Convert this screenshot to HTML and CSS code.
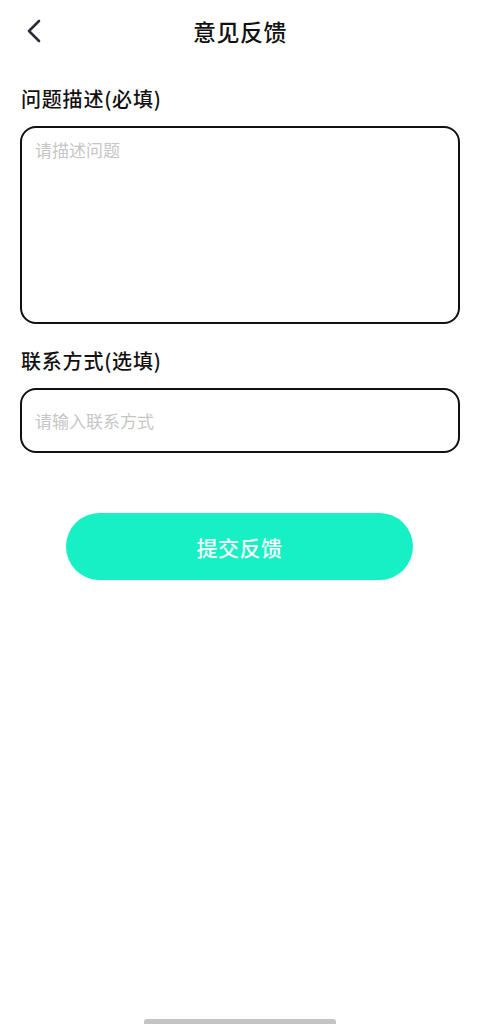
FILE: index.html
```html
<!DOCTYPE html>
<html lang="zh-CN">
<head>
<meta charset="utf-8">
<title>意见反馈</title>
<link rel="stylesheet" href="styles.css">
</head>
<body>
<div class="page">
  <header class="topbar">
    <button class="back" aria-label="返回">
      <svg width="16" height="24" viewBox="0 0 16 24"><path d="M13 2 L3 12 L13 22" fill="none" stroke="#2b2b3b" stroke-width="2.6" stroke-linecap="round" stroke-linejoin="round"/></svg>
    </button>
    <h1 class="title">意见反馈</h1>
  </header>
  <main class="form">
    <label class="label label-first">问题描述(必填)</label>
    <textarea class="area" placeholder="请描述问题"></textarea>
    <label class="label label-second">联系方式(选填)</label>
    <input class="field" type="text" placeholder="请输入联系方式">
    <div class="actions">
      <button class="submit">提交反馈</button>
    </div>
  </main>
  <div class="home-bar"></div>
</div>
</body>
</html>
```
FILE: styles.css
```css
* { box-sizing: border-box; }
html, body { margin: 0; padding: 0; background: #fff; }
body {
  font-family: "Noto Sans CJK SC", "Noto Sans", sans-serif;
  color: #111;
  width: 480px;
  height: 1024px;
  overflow: hidden;
}
.page {
  position: relative;
  height: 1024px;
  display: flex;
  flex-direction: column;
}
.topbar {
  position: relative;
  height: 62px;
  display: flex;
  align-items: center;
  justify-content: center;
}
.back {
  position: absolute;
  left: 24px;
  top: 18px;
  width: 20px;
  height: 26px;
  padding: 0;
  border: 0;
  background: none;
  display: flex;
  align-items: center;
  justify-content: center;
}
.title {
  margin: 0;
  font-size: 23px;
  font-weight: 500;
  line-height: 30px;
  color: #111;
  letter-spacing: 0.5px;
}
.form {
  padding: 0 20px;
  display: flex;
  flex-direction: column;
}
.label {
  display: block;
  font-size: 20px;
  font-weight: 500;
  line-height: 28px;
  color: #111;
  padding-left: 1px;
  letter-spacing: 0.8px;
}
.label-first { margin-top: 23px; margin-bottom: 13px; }
.label-second { margin-top: 23px; margin-bottom: 13px; }
.area, .field {
  width: 440px;
  border: 2px solid #111;
  border-radius: 16px;
  font-family: "Noto Sans CJK SC", "Noto Sans", sans-serif;
  font-size: 17px;
  color: #222;
  background: #fff;
  outline: none;
  resize: none;
}
.area {
  height: 198px;
  padding: 10px 13px;
  line-height: 24px;
}
.field {
  height: 65px;
  padding: 0 13px;
}
.area::placeholder, .field::placeholder { color: #c6c6c6; }
.actions {
  margin-top: 60px;
  display: flex;
  justify-content: center;
}
.submit {
  width: 347px;
  height: 67px;
  border: 0;
  border-radius: 34px;
  background: #16f0c4;
  color: #fff;
  font-family: "Noto Sans CJK SC", "Noto Sans", sans-serif;
  font-size: 21px;
  font-weight: 500;
  letter-spacing: 0.5px;
  margin-left: -1px;
}
.home-bar {
  position: absolute;
  left: 144px;
  bottom: 0;
  width: 192px;
  height: 5px;
  border-radius: 3px 3px 0 0;
  background: #c4c4c4;
}
```
